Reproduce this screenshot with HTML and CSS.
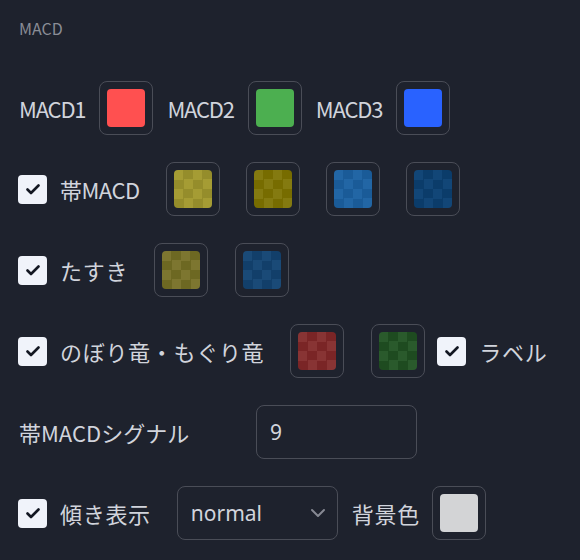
FILE: index.html
```html
<!DOCTYPE html>
<html lang="ja">
<head>
  <meta charset="UTF-8">
  <meta name="viewport" content="width=device-width, initial-scale=1.0">
  <title>MACD settings</title>
  <link rel="stylesheet" href="styles.css">
</head>
<body>
  <div class="panel">
    <div class="title">MACD</div>

    <!-- line colours -->
    <div class="row row-tight">
      <span class="label latin">MACD1</span>
      <span class="swatch"><span class="fill solid-red"></span></span>
      <span class="label latin">MACD2</span>
      <span class="swatch"><span class="fill solid-green"></span></span>
      <span class="label latin">MACD3</span>
      <span class="swatch"><span class="fill solid-blue"></span></span>
    </div>

    <div class="row row-band">
      <span class="check-label">
        <span class="checkbox"><svg viewBox="0 0 14 11" width="14" height="11"><path d="M1.5 5.5 L5 9 L12.5 1.5" fill="none" stroke="#131722" stroke-width="2.6" stroke-linecap="round" stroke-linejoin="round"/></svg></span>
        <span class="label mixed">帯MACD</span>
      </span>
      <span class="swatch"><span class="fill chk-yellow"></span></span>
      <span class="swatch"><span class="fill chk-olive"></span></span>
      <span class="swatch"><span class="fill chk-blue"></span></span>
      <span class="swatch"><span class="fill chk-navy"></span></span>
    </div>

    <div class="row">
      <span class="check-label">
        <span class="checkbox"><svg viewBox="0 0 14 11" width="14" height="11"><path d="M1.5 5.5 L5 9 L12.5 1.5" fill="none" stroke="#131722" stroke-width="2.6" stroke-linecap="round" stroke-linejoin="round"/></svg></span>
        <span class="label kana">たすき</span>
      </span>
      <span class="swatch"><span class="fill chk-tasuki-y"></span></span>
      <span class="swatch"><span class="fill chk-tasuki-b"></span></span>
    </div>

    <div class="row">
      <span class="check-label">
        <span class="checkbox"><svg viewBox="0 0 14 11" width="14" height="11"><path d="M1.5 5.5 L5 9 L12.5 1.5" fill="none" stroke="#131722" stroke-width="2.6" stroke-linecap="round" stroke-linejoin="round"/></svg></span>
        <span class="label kana">のぼり竜・もぐり竜</span>
      </span>
      <span class="swatch"><span class="fill chk-red"></span></span>
      <span class="swatch"><span class="fill chk-green"></span></span>
      <span class="check-label check-label-wide">
        <span class="checkbox"><svg viewBox="0 0 14 11" width="14" height="11"><path d="M1.5 5.5 L5 9 L12.5 1.5" fill="none" stroke="#131722" stroke-width="2.6" stroke-linecap="round" stroke-linejoin="round"/></svg></span>
        <span class="label kana">ラベル</span>
      </span>
    </div>

    <div class="row">
      <span class="label signal-label">帯MACDシグナル</span>
      <span class="field">9</span>
    </div>

    <div class="row row-last">
      <span class="check-label">
        <span class="checkbox"><svg viewBox="0 0 14 11" width="14" height="11"><path d="M1.5 5.5 L5 9 L12.5 1.5" fill="none" stroke="#131722" stroke-width="2.6" stroke-linecap="round" stroke-linejoin="round"/></svg></span>
        <span class="label kana">傾き表示</span>
      </span>
      <span class="field select">
        normal
        <svg class="chevron" viewBox="0 0 16 10" width="16" height="10"><path d="M2 2 L8 8 L14 2" fill="none" stroke="#868993" stroke-width="2" stroke-linecap="round" stroke-linejoin="round"/></svg>
      </span>
      <span class="label kana">背景色</span>
      <span class="swatch"><span class="fill solid-gray"></span></span>
    </div>
  </div>
</body>
</html>
```

FILE: styles.css
```css
body {
  margin: 0;
  background-color: #1e222d;
  color: #d1d4dc;
  font-family: "Noto Sans CJK JP", "Noto Sans", sans-serif;
  font-size: 22px;
}

.panel {
  padding: 16px 18px 0 18px;
}

.title {
  font-size: 16px;
  line-height: 24px;
  color: #8a8d96;
  padding-left: 1px;
  margin-bottom: 41px;
}

/* one settings line */
.row {
  display: flex;
  align-items: center;
  gap: 27px;
  height: 54px;
  margin-bottom: 27px;
}

.row-tight {
  gap: 14px;
}

.row-band {
  gap: 26px;
}

.label {
  line-height: 30px;
  white-space: nowrap;
}

.latin {
  letter-spacing: -1.2px;
}

.mixed {
  letter-spacing: -0.5px;
}

.kana {
  letter-spacing: 0.7px;
  margin-right: -1px;
}

.row-tight .label:first-child {
  padding-left: 1px;
}

.check-label {
  display: flex;
  align-items: center;
  gap: 13px;
}

.check-label-wide {
  gap: 13px;
  margin-left: -15px;
}

.checkbox {
  width: 29px;
  height: 29px;
  border-radius: 4px;
  background-color: #f0f3fa;
  display: flex;
  align-items: center;
  justify-content: center;
}

/* colour swatch buttons */
.swatch {
  box-sizing: border-box;
  width: 54px;
  height: 54px;
  border: 1px solid #4a4d57;
  border-radius: 8px;
  padding: 7px;
  flex: none;
}

.fill {
  display: block;
  width: 38px;
  height: 38px;
  border-radius: 4px;
}

.solid-red { background-color: #ff5050; }
.solid-green { background-color: #4caf50; }
.solid-blue { background-color: #2962ff; }
.solid-gray { background-color: #d3d4d6; }

.chk-yellow { background: conic-gradient(#958d2b 25%, #a59c34 0 50%, #958d2b 0 75%, #a59c34 0) 0 0 / 19px 19px; }
.chk-olive { background: conic-gradient(#776c00 25%, #847a10 0 50%, #776c00 0 75%, #847a10 0) 0 0 / 19px 19px; }
.chk-blue { background: conic-gradient(#1a5b98 25%, #2266a5 0 50%, #1a5b98 0 75%, #2266a5 0) 0 0 / 19px 19px; }
.chk-navy { background: conic-gradient(#0b3c6a 25%, #124677 0 50%, #0b3c6a 0 75%, #124677 0) 0 0 / 19px 19px; }
.chk-tasuki-y { background: conic-gradient(#6d6822 25%, #7d7630 0 50%, #6d6822 0 75%, #7d7630 0) 0 0 / 19px 19px; }
.chk-tasuki-b { background: conic-gradient(#123f6a 25%, #1a4a77 0 50%, #123f6a 0 75%, #1a4a77 0) 0 0 / 19px 19px; }
.chk-red { background: conic-gradient(#7a2526 25%, #883434 0 50%, #7a2526 0 75%, #883434 0) 0 0 / 19px 19px; }
.chk-green { background: conic-gradient(#1e4b20 25%, #2a5a2c 0 50%, #1e4b20 0 75%, #2a5a2c 0) 0 0 / 19px 19px; }

/* text inputs */
.signal-label {
  width: 210px;
  padding-left: 1px;
}

.field {
  box-sizing: border-box;
  width: 161px;
  height: 54px;
  border: 1px solid #4a4d57;
  border-radius: 8px;
  padding: 0 13px;
  display: flex;
  align-items: center;
  font-family: "Noto Sans", sans-serif;
  font-size: 21px;
  color: #d1d4dc;
}

.select {
  justify-content: space-between;
  margin-right: -13px;
}

.chevron {
  margin-right: -2px;
}

.row-last .label + .swatch {
  margin-left: -14px;
}
```
